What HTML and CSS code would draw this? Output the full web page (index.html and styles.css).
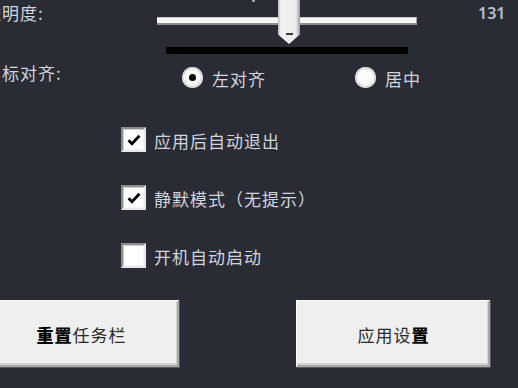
FILE: index.html
```html
<!DOCTYPE html>
<html lang="zh-CN">
<head>
<meta charset="utf-8">
<title>设置</title>
<link rel="stylesheet" href="styles.css">
</head>
<body>
<div class="panel">
  <div class="row row-slider">
    <span class="label">透明度:</span>
    <div class="slider">
      <div class="tick"></div>
      <div class="track"></div>
      <div class="thumb"><span class="grip"></span></div>
      <div class="bar"></div>
    </div>
    <span class="value">131</span>
  </div>
  <div class="row row-align">
    <span class="label">图标对齐:</span>
    <div class="radios">
      <div class="radio checked"><span class="circle"><span class="dot"></span></span><span class="rtext">左对齐</span></div>
      <div class="radio"><span class="circle"><span class="dot"></span></span><span class="rtext">居中</span></div>
    </div>
  </div>
  <div class="checks">
    <div class="check checked"><span class="box"><svg viewBox="0 0 16 16" width="16" height="16"><path d="M2.5 8.2 L6 11.8 L13.5 3.8" fill="none" stroke="#000" stroke-width="2.8"/></svg></span><span class="ctext">应用后自动退出</span></div>
    <div class="check checked"><span class="box"><svg viewBox="0 0 16 16" width="16" height="16"><path d="M2.5 8.2 L6 11.8 L13.5 3.8" fill="none" stroke="#000" stroke-width="2.8"/></svg></span><span class="ctext">静默模式（无提示）</span></div>
    <div class="check"><span class="box"></span><span class="ctext">开机自动启动</span></div>
  </div>
  <div class="buttons">
    <button class="btn btn-left"><b class="dark">重置</b>任务栏</button>
    <button class="btn btn-right">应用设<b class="dark">置</b></button>
  </div>
</div>
</body>
</html>
```
FILE: styles.css
```css
html, body {
  margin: 0;
  padding: 0;
  background: #292c35;
  overflow: hidden;
}
.panel {
  width: 518px;
  height: 388px;
  font-family: "Noto Sans CJK SC", "Noto Sans", sans-serif;
  font-size: 17px;
  letter-spacing: 1px;
  color: #d2d5dc;
}
.row {
  display: flex;
}
.label {
  margin-left: -16px;
  line-height: 20px;
  white-space: nowrap;
}
.row-slider {
  height: 58px;
}
.row-slider .label {
  width: 173px;
  margin-top: 3px;
}
.slider {
  position: relative;
  width: 260px;
}
.tick {
  position: absolute;
  left: 95px;
  top: 0;
  width: 3px;
  height: 2px;
  background: #9aa0aa;
}
.track {
  margin-top: 17px;
  height: 5px;
  background: #f6f6f6;
  border-top: 1px solid #c8c8c8;
  border-bottom: 2px solid #8d8d90;
  border-right: 1px solid #a0a0a0;
}
.thumb {
  position: absolute;
  left: 121px;
  top: -4px;
  width: 22px;
  height: 48px;
  background: linear-gradient(90deg, #b9b9bc 0, #f2f2f2 3px, #ececec 18px, #9a9a9c 22px);
  clip-path: polygon(0 0, 100% 0, 100% 80%, 50% 100%, 0 80%);
}
.grip {
  position: absolute;
  left: 8px;
  top: 37px;
  width: 7px;
  height: 2px;
  background: #3a3a3a;
}
.bar {
  margin-top: 22px;
  margin-left: 9px;
  width: 242px;
  height: 7px;
  background: #000;
}
.value {
  margin-left: 61px;
  margin-top: 3px;
  line-height: 20px;
  font-family: "Noto Sans", sans-serif;
  font-weight: 600;
  font-size: 16px;
  letter-spacing: 0;
  color: #b9c0cb;
}
.row-align {
  height: 38px;
  align-items: center;
}
.row-align .label {
  width: 198px;
  margin-top: -8px;
}
.radios {
  display: flex;
}
.radio {
  display: flex;
  align-items: center;
  gap: 9px;
}
.radio + .radio {
  margin-left: 89px;
}
.circle {
  width: 21px;
  height: 21px;
  border-radius: 50%;
  background: #fbfbfb;
  box-shadow: inset 0 0 0 2px #d9d9d9;
  display: flex;
  align-items: center;
  justify-content: center;
}
.dot {
  width: 7px;
  height: 7px;
  border-radius: 50%;
  background: #000;
  visibility: hidden;
}
.radio.checked .dot {
  visibility: visible;
}
.rtext {
  line-height: 20px;
  margin-top: 4px;
}
.checks {
  margin-top: 31px;
  margin-left: 121px;
  display: flex;
  flex-direction: column;
  gap: 33px;
}
.check {
  display: flex;
  align-items: center;
  height: 25px;
  gap: 8px;
}
.box {
  box-sizing: border-box;
  width: 25px;
  height: 25px;
  background: #fff;
  border: 2px solid;
  border-color: #8c8c8c #e8e8e8 #e8e8e8 #8c8c8c;
  box-shadow: inset 1px 1px 0 #cfcfcf, inset -1px -1px 0 #f4f4f4;
  display: flex;
  align-items: center;
  justify-content: center;
}
.ctext {
  line-height: 20px;
  margin-top: 3px;
  white-space: nowrap;
}
.buttons {
  margin-top: 32px;
  margin-left: -17px;
  display: flex;
  gap: 117px;
}
.btn {
  box-sizing: border-box;
  height: 67px;
  padding: 0;
  background: #efefef;
  border: none;
  border-top: 1px solid #fdfdfd;
  border-left: 1px solid #fdfdfd;
  box-shadow: inset -2px -2px 0 #a8a8a8, inset -3px -4px 0 #d4d4d4, 1px 1px 0 #5a5a5a;
  font-family: "Noto Sans CJK SC", "Noto Sans", sans-serif;
  font-size: 17px;
  letter-spacing: 1px;
  color: #2a2a2a;
}
.btn-left {
  width: 196px;
}
.btn-right {
  width: 194px;
}
.dark {
  color: #000;
  font-weight: 900;
}
```
